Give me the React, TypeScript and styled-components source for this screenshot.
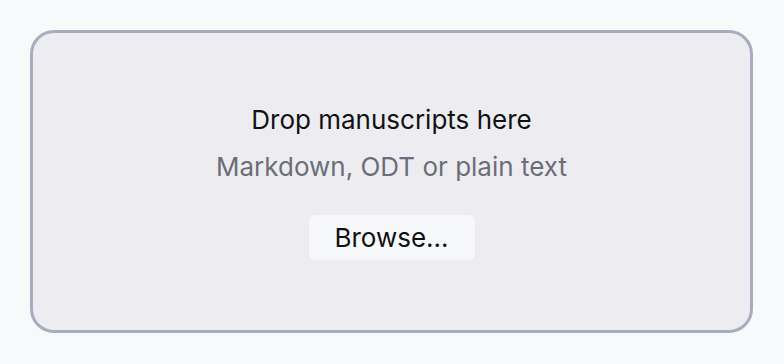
import React from "react";
import styled, { createGlobalStyle } from "styled-components";

const Global = createGlobalStyle`
  html, body { margin: 0; padding: 0; background: #f8f9fb; }
  body { font-family: Inter, "Noto Sans", sans-serif; }
`;

const Page = styled.div`
  box-sizing: border-box;
  width: 784px;
  height: 364px;
  padding: 30px 31px 31px 30px;
  display: flex;
`;

const DropZone = styled.div`
  box-sizing: border-box;
  flex: 1;
  border: 3px solid #a8adbd;
  border-radius: 24px;
  background: #ededf1;
  display: flex;
  flex-direction: column;
  align-items: center;
  justify-content: center;
`;

const Title = styled.div`
  font-size: 26px;
  color: #111113;
  line-height: 32px;
`;

const Hint = styled.div`
  font-size: 26px;
  color: #6b6e78;
  line-height: 32px;
  margin-top: 15px;
`;

const BrowseButton = styled.button`
  margin-top: 32px;
  width: 166px;
  height: 45px;
  border: none;
  border-radius: 6px;
  background: #f7f8fa;
  font-family: Inter, "Noto Sans", sans-serif;
  font-size: 26px;
  color: #111113;
  padding: 0;
`;

export default function App() {
  return (
    <>
      <Global />
      <Page>
        <DropZone>
          <Title>Drop manuscripts here</Title>
          <Hint>Markdown, ODT or plain text</Hint>
          <BrowseButton>Browse...</BrowseButton>
        </DropZone>
      </Page>
    </>
  );
}
